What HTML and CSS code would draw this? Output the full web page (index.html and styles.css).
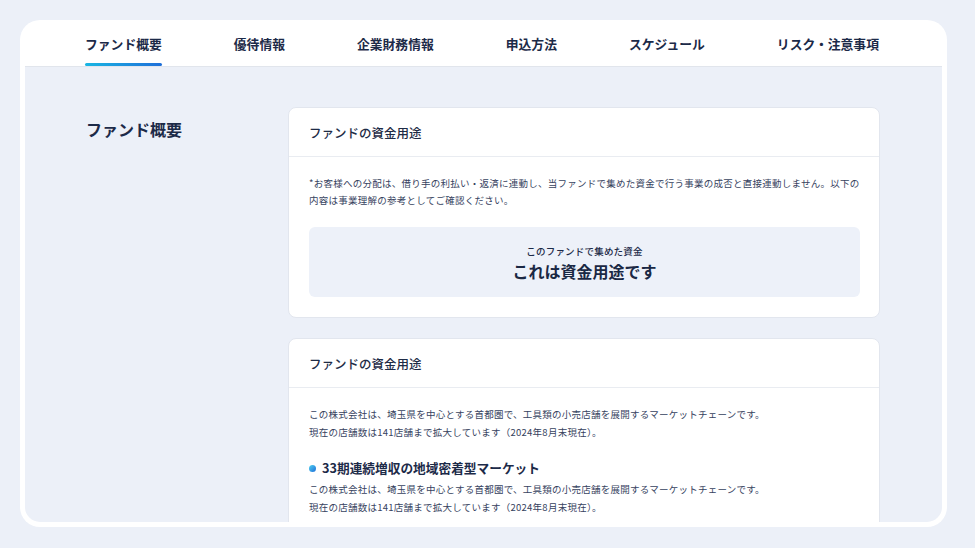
FILE: index.html
```html
<!DOCTYPE html>
<html lang="ja">
<head>
<meta charset="utf-8">
<title>ファンド概要</title>
<link rel="stylesheet" href="styles.css">
</head>
<body>
<div class="frame">
  <nav class="tabs">
    <a class="tab active">ファンド概要</a>
    <a class="tab">優待情報</a>
    <a class="tab">企業財務情報</a>
    <a class="tab">申込方法</a>
    <a class="tab">スケジュール</a>
    <a class="tab">リスク・注意事項</a>
  </nav>
  <main class="main">
    <aside class="side">
      <h2 class="side-title">ファンド概要</h2>
    </aside>
    <div class="cards">
      <section class="card">
        <header class="card-head">ファンドの資金用途</header>
        <div class="card-body">
          <p class="text">*お客様への分配は、借り手の利払い・返済に連動し、当ファンドで集めた資金で行う事業の成否と直接連動しません。以下の内容は事業理解の参考としてご確認ください。</p>
          <div class="usage">
            <div class="usage-label">このファンドで集めた資金</div>
            <div class="usage-value">これは資金用途です</div>
          </div>
        </div>
      </section>
      <section class="card">
        <header class="card-head">ファンドの資金用途</header>
        <div class="card-body">
          <p class="text compact">この株式会社は、埼玉県を中心とする首都圏で、工具類の小売店舗を展開するマーケットチェーンです。<br>現在の店舗数は141店舗まで拡大しています（2024年8月末現在）。</p>
          <h3 class="point"><span class="dot"></span>33期連続増収の地域密着型マーケット</h3>
          <p class="text compact tight">この株式会社は、埼玉県を中心とする首都圏で、工具類の小売店舗を展開するマーケットチェーンです。<br>現在の店舗数は141店舗まで拡大しています（2024年8月末現在）。</p>
        </div>
      </section>
    </div>
  </main>
</div>
</body>
</html>
```

FILE: styles.css
```css
* { box-sizing: border-box; margin: 0; padding: 0; }
html, body {
  width: 975px;
  height: 548px;
  overflow: hidden;
}
body {
  background: #ecf0f8;
  font-family: "Noto Sans CJK JP", "Noto Sans", sans-serif;
  color: #1c2a48;
}
.frame {
  margin: 20px 0 0 20px;
  width: 927px;
  height: 507px;
  background: #ffffff;
  border-radius: 20px;
  padding: 0 5px 5px;
  display: flex;
  flex-direction: column;
  overflow: hidden;
}
.tabs {
  height: 47px;
  flex: none;
  display: flex;
  gap: 72px;
  padding-left: 60px;
  border-bottom: 1px solid #e1e5ec;
}
.tab {
  position: relative;
  height: 46px;
  display: flex;
  align-items: center;
  font-size: 12.8px;
  font-weight: 700;
  color: #1c2a48;
  white-space: nowrap;
  text-decoration: none;
}
.tab.active::after {
  content: "";
  position: absolute;
  left: 0;
  right: 0;
  bottom: 0;
  height: 3px;
  border-radius: 2px;
  background: linear-gradient(90deg, #19b6e3, #1f6fd9);
}
.main {
  flex: 1;
  min-height: 0;
  background: #ecf0f8;
  border-radius: 0 0 15px 15px;
  overflow: hidden;
  display: flex;
  padding: 40px 62px 0 61px;
}
.side {
  width: 202px;
  flex: none;
}
.side-title {
  margin-top: 10px;
  font-size: 16px;
  line-height: 24px;
  font-weight: 700;
  color: #1c2a48;
}
.cards {
  flex: 1;
  display: flex;
  flex-direction: column;
  gap: 20px;
}
.card {
  flex: none;
  background: #ffffff;
  border: 1px solid #e2e6ee;
  border-radius: 8px;
}
.card-head {
  height: 49px;
  display: flex;
  align-items: center;
  padding: 0 20px;
  font-size: 12.5px;
  font-weight: 500;
  color: #1e2b46;
  border-bottom: 1px solid #e9ecf1;
}
.card-body {
  padding: 18px 19px 20px 20px;
}
.text {
  font-size: 9.5px;
  letter-spacing: 0.25px;
  line-height: 17px;
  color: #36425e;
}
.text.compact {
  line-height: 17.5px;
}
.usage {
  margin-top: 18px;
  height: 70px;
  background: #edf1f9;
  border-radius: 6px;
  padding-top: 17px;
  text-align: center;
}
.usage-label {
  font-size: 9.5px;
  letter-spacing: 0.2px;
  line-height: 14px;
  font-weight: 500;
  color: #1c2a48;
}
.usage-value {
  margin-top: 2px;
  font-size: 16px;
  line-height: 22px;
  font-weight: 700;
  color: #1a2844;
}
.point {
  margin-top: 17px;
  display: flex;
  align-items: center;
  gap: 6px;
  font-size: 12.7px;
  line-height: 20px;
  font-weight: 700;
  color: #1c2a48;
}
.dot {
  width: 7px;
  height: 7px;
  border-radius: 50%;
  background: linear-gradient(135deg, #4fd0ef, #1f6fd9);
}
.text.tight {
  margin-top: 3px;
}
```
